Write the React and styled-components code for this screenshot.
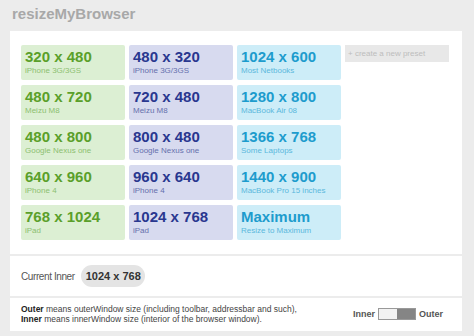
import styled, { createGlobalStyle } from "styled-components";

const GlobalStyle = createGlobalStyle`
  html, body {
    margin: 0;
    padding: 0;
    background: #ececec;
    font-family: "Liberation Sans", Arial, sans-serif;
  }
`;

const Page = styled.div`
  width: 474px;
  height: 336px;
  padding: 4px 12px 0 10px;
  box-sizing: border-box;
  display: flex;
  flex-direction: column;
`;

const Logo = styled.h1`
  margin: 0 0 8px 2px;
  font-size: 15px;
  line-height: 19px;
  font-weight: bold;
  color: #a8a8a8;
`;

const Panel = styled.div`
  background: #fff;
  margin-bottom: 2px;
  padding: ${(p) => p.pad};
  display: flex;
  align-items: center;
  gap: ${(p) => p.gap || "0"};
`;

const Columns = styled.div`
  display: flex;
  gap: 4px;
  align-items: flex-start;
`;

const Column = styled.div`
  display: flex;
  flex-direction: column;
  gap: 5px;
  width: 104px;
`;

const tones = {
  green: { bg: "#dcefd3", fg: "#5a9f2a", sub: "#8cc070" },
  purple: { bg: "#d7daef", fg: "#29378f", sub: "#6670ad" },
  blue: { bg: "#cdedf8", fg: "#1d9ccd", sub: "#5bb8dc" },
};

const Tile = styled.div`
  height: 35px;
  box-sizing: border-box;
  padding: 3px 4px 0;
  background: ${(p) => tones[p.tone].bg};
  border-radius: 2px;
  cursor: pointer;
`;

const Size = styled.div`
  font-size: 15px;
  line-height: 17px;
  font-weight: bold;
  color: ${(p) => tones[p.tone].fg};
`;

const Label = styled.div`
  font-size: 8px;
  line-height: 11px;
  color: ${(p) => tones[p.tone].sub};
`;

const NewPreset = styled.div`
  height: 17px;
  box-sizing: border-box;
  padding: 0 3px;
  background: #e8e8e8;
  color: #bdbdbd;
  font-size: 8px;
  line-height: 17px;
`;

const Caption = styled.span`
  font-size: 10px;
  color: #555;
  letter-spacing: -0.4px;
`;

const Pill = styled.span`
  background: #e4e4e4;
  border-radius: 11px;
  height: 22px;
  line-height: 22px;
  padding: 0 4px 0 5px;
  font-size: 11px;
  font-weight: bold;
  color: #333;
`;

const Note = styled.div`
  flex: 1;
  font-size: 8.5px;
  line-height: 10px;
  color: #444;

  b {
    color: #222;
  }
`;

const Switch = styled.div`
  display: flex;
  align-items: center;
  gap: 3px;
  margin-right: 8px;
  font-size: 9px;
  font-weight: bold;
  color: #555;
`;

const Track = styled.div`
  display: flex;
  width: 38px;
  height: 12px;
  box-sizing: border-box;
  border: 1px solid #999;
`;

const Half = styled.div`
  flex: 1;
  background: ${(p) => (p.$on ? "#858585" : "#f2f2f2")};
`;

const presets = [
  {
    tone: "green",
    items: [
      ["320 x 480", "iPhone 3G/3GS"],
      ["480 x 720", "Meizu M8"],
      ["480 x 800", "Google Nexus one"],
      ["640 x 960", "iPhone 4"],
      ["768 x 1024", "iPad"],
    ],
  },
  {
    tone: "purple",
    items: [
      ["480 x 320", "iPhone 3G/3GS"],
      ["720 x 480", "Meizu M8"],
      ["800 x 480", "Google Nexus one"],
      ["960 x 640", "iPhone 4"],
      ["1024 x 768", "iPad"],
    ],
  },
  {
    tone: "blue",
    items: [
      ["1024 x 600", "Most Netbooks"],
      ["1280 x 800", "MacBook Air 08"],
      ["1366 x 768", "Some Laptops"],
      ["1440 x 900", "MacBook Pro 15 inches"],
      ["Maximum", "Resize to Maximum"],
    ],
  },
];

export default function App() {
  return (
    <>
      <GlobalStyle />
      <Page>
        <Logo>resizeMyBrowser</Logo>
        <Panel pad="14px 11px 14px 11px">
          <Columns>
            {presets.map((col) => (
              <Column key={col.tone}>
                {col.items.map(([size, label]) => (
                  <Tile key={size} tone={col.tone}>
                    <Size tone={col.tone}>{size}</Size>
                    <Label tone={col.tone}>{label}</Label>
                  </Tile>
                ))}
              </Column>
            ))}
            <Column>
              <NewPreset>+ create a new preset</NewPreset>
            </Column>
          </Columns>
        </Panel>
        <Panel pad="9px 11px 9px 11px" gap="6px">
          <Caption>Current Inner</Caption>
          <Pill>1024 x 768</Pill>
        </Panel>
        <Panel pad="6px 11px 7px 11px">
          <Note>
            <b>Outer</b> means outerWindow size (including toolbar, addressbar and such),
            <br />
            <b>Inner</b> means innerWindow size (interior of the browser window).
          </Note>
          <Switch>
            Inner
            <Track>
              <Half />
              <Half $on />
            </Track>
            Outer
          </Switch>
        </Panel>
      </Page>
    </>
  );
}
